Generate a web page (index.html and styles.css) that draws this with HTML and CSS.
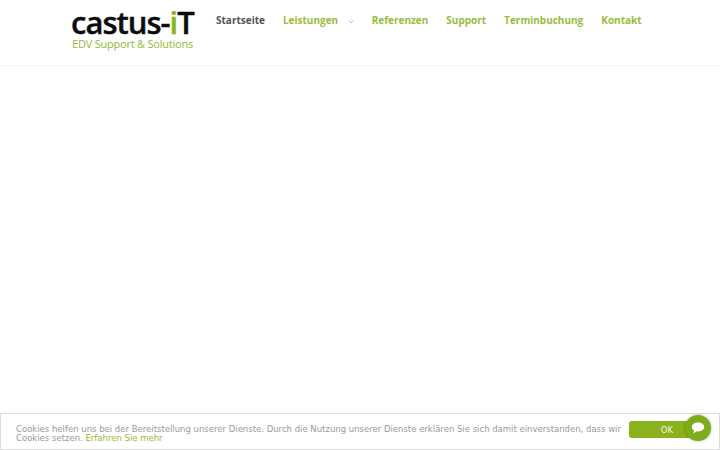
FILE: index.html
```html
<!DOCTYPE html>
<html lang="de">
<head>
    <meta charset="UTF-8">
    <meta name="viewport" content="width=device-width, initial-scale=1.0">
    <title>castus-iT</title>
    <link rel="stylesheet" href="styles.css">
</head>
<body>
    <header class="site-header">
        <a class="logo" href="#">
            <span class="logo-name">castus-<span class="logo-i">i</span>T</span>
            <span class="logo-sub">EDV Support &amp; Solutions</span>
        </a>
        <nav class="main-nav">
            <a class="nav-link active" href="#">Startseite</a>
            <a class="nav-link" href="#">Leistungen<svg class="caret" width="6" height="4" viewBox="0 0 6 4"><path d="M0.5 0.5 L3 3 L5.5 0.5" fill="none" stroke="#a9b6a0" stroke-width="0.8"/></svg></a>
            <a class="nav-link" href="#">Referenzen</a>
            <a class="nav-link" href="#">Support</a>
            <a class="nav-link" href="#">Terminbuchung</a>
            <a class="nav-link" href="#">Kontakt</a>
        </nav>
    </header>

    <main class="content"></main>

    <!-- Cookie Hinweis -->
    <div class="cookie-bar">
        <p class="cookie-text">Cookies helfen uns bei der Bereitstellung unserer Dienste. Durch die Nutzung unserer Dienste erklären Sie sich damit einverstanden, dass wir Cookies setzen. <a href="#">Erfahren Sie mehr</a></p>
        <button class="cookie-ok">OK</button>
    </div>

    <button class="chat-button" aria-label="Chat">
        <svg width="14" height="12" viewBox="0 0 14 12"><path d="M7 0.5 C10.6 0.5 13.2 2.4 13.2 5 C13.2 7.6 10.6 9.4 7.2 9.4 C6.6 9.4 6 9.3 5.5 9.2 C4.6 10.3 3.3 11 1.8 11.2 C2.6 10.4 3.1 9.4 3.1 8.4 C1.6 7.6 0.8 6.4 0.8 5 C0.8 2.4 3.4 0.5 7 0.5 Z" fill="#fff"/></svg>
    </button>
</body>
</html>
```

FILE: styles.css
```css
body {
    margin: 0;
    height: 450px;
    overflow: hidden;
    display: flex;
    flex-direction: column;
    background-color: #fff;
    font-family: "Open Sans", sans-serif;
}

a {
    text-decoration: none;
}

.site-header {
    display: flex;
    align-items: flex-start;
    height: 65px;
    padding-left: 71px;
    border-bottom: 1px solid #f6f6f6;
}

.logo {
    display: flex;
    flex-direction: column;
    width: 145px;
    padding-top: 8px;
}

.logo-name {
    font-size: 31px;
    font-weight: 600;
    line-height: 29px;
    color: #0c0c0c;
    letter-spacing: -1px;
    -webkit-text-stroke: 0.4px;
}

.logo-i {
    color: #8cb21f;
}

.logo-sub {
    font-size: 11px;
    line-height: 13px;
    padding-left: 1px;
    color: #93b93c;
    letter-spacing: -0.22px;
}

.main-nav {
    display: flex;
    gap: 18px;
    padding-top: 13px;
}

.nav-link {
    font-size: 10px;
    font-weight: 700;
    line-height: 14px;
    color: #9abd3c;
}

.nav-link.active {
    color: #555;
}

.caret {
    margin-left: 9.5px;
}

.content {
    flex: 1;
}

.cookie-bar {
    display: flex;
    align-items: center;
    gap: 5px;
    padding: 4px 14px 0 15px;
    box-sizing: border-box;
    height: 37px;
    border: 1px solid #dcdcdc;
}

.cookie-text {
    flex: 1;
    margin: 0;
    font-family: "DejaVu Sans", sans-serif;
    font-size: 8.5px;
    line-height: 8.5px;
    color: #9a9a9a;
}

.cookie-text a {
    color: #97ba35;
}

.cookie-ok {
    width: 76px;
    height: 17px;
    margin-top: -8px;
    padding: 0;
    border: none;
    border-radius: 3px;
    background-color: #8ab21d;
    color: #f2f6e4;
    font-family: "DejaVu Sans", sans-serif;
    font-size: 8.5px;
}

.chat-button {
    position: absolute;
    left: 685px;
    top: 415px;
    width: 26px;
    height: 26px;
    padding: 0;
    display: flex;
    align-items: center;
    justify-content: center;
    border: none;
    border-radius: 50%;
    background-color: #7eac1c;
    box-shadow: 0 0 3px rgba(0, 0, 0, 0.3);
}
```
